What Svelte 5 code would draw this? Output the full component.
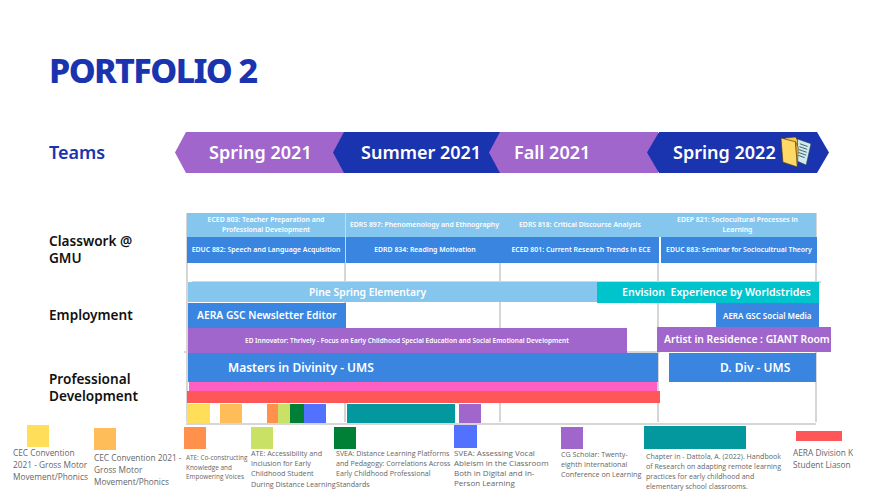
<script>
  const originX = 176
  const originY = 213

  const seasons = [
    { name: 'Spring 2021', color: 'purple', width: 169, pad: 34 },
    { name: 'Summer 2021', color: 'navy', width: 167, pad: 28 },
    { name: 'Fall 2021', color: 'purple', width: 169, pad: 25 },
    { name: 'Spring 2022', color: 'navy last', width: 182, pad: 26, folder: true }
  ]

  const gridX = [187, 345, 500, 658, 816]
  const gridY = [
    { y: 281, x0: 192, x1: 821 },
    { y: 351, x0: 184, x1: 660 },
    { y: 423, x0: 186, x1: 816 }
  ]

  const sky = '#85c6ee', blue = '#3985e0', purple = '#a066cb', teal = '#03989e'
  const bars = [
    { x0: 187, x1: 345, y0: 213, y1: 237, c: sky, fs: 6.9, text: 'ECED 803: Teacher Preparation and Professional Development' },
    { x0: 346, x1: 501, y0: 213, y1: 237, c: sky, fs: 6.9, one: true, text: 'EDRS 897: Phenomenology and Ethnography' },
    { x0: 501, x1: 659, y0: 213, y1: 237, c: sky, fs: 6.9, text: 'EDRS 818: Critical Discourse Analysis' },
    { x0: 659, x1: 816, y0: 213, y1: 237, c: sky, fs: 6.9, text: 'EDEP 821: Sociocultural Processes in\nLearning' },
    { x0: 187, x1: 345, y0: 237, y1: 263, c: blue, fs: 6.9, text: 'EDUC 882: Speech and Language Acquisition' },
    { x0: 346, x1: 504, y0: 237, y1: 263, c: blue, fs: 6.9, text: 'EDRD 834: Reading Motivation' },
    { x0: 503, x1: 659, y0: 237, y1: 263, c: blue, fs: 6.9, text: 'ECED 801: Current Research Trends in ECE' },
    { x0: 661, x1: 817, y0: 237, y1: 263, c: blue, fs: 6.9, text: 'EDUC 883: Seminar for Sociocultrual Theory' },
    { x0: 188, x1: 597, y0: 282, y1: 302, c: sky, fs: 10.3, text: 'Pine Spring Elementary', tx: 309 },
    { x0: 597, x1: 819, y0: 282, y1: 303, c: '#00c4cc', fs: 10.6, text: 'Envision  Experience by Worldstrides', tx: 622 },
    { x0: 188, x1: 346, y0: 303, y1: 328, c: blue, fs: 10.3, text: 'AERA GSC Newsletter Editor', tx: 197 },
    { x0: 716, x1: 819, y0: 303, y1: 328, c: blue, fs: 8, text: 'AERA GSC Social Media', tx: 723 },
    { x0: 188, x1: 627, y0: 328, y1: 353, c: purple, fs: 6.5, text: 'ED Innovator: Thrively - Focus on Early Childhood Special Education and Social Emotional Development', tx: 245 },
    { x0: 657, x1: 831, y0: 327, y1: 352, c: purple, fs: 10.3, text: 'Artist in Residence : GIANT Room', tx: 664 },
    { x0: 188, x1: 658, y0: 353, y1: 382, c: blue, fs: 12, text: 'Masters in Divinity - UMS', tx: 228 },
    { x0: 669, x1: 816, y0: 353, y1: 382, c: blue, fs: 12, text: 'D. Div - UMS', tx: 720 },
    { x0: 189, x1: 657, y0: 382, y1: 391, c: '#ff5fc0' },
    { x0: 187, x1: 660, y0: 391, y1: 403, c: '#ff5757' },
    { x0: 187, x1: 210, y0: 404, y1: 423, c: '#ffde59' },
    { x0: 220, x1: 242, y0: 404, y1: 423, c: '#ffbd59' },
    { x0: 267, x1: 278, y0: 404, y1: 423, c: '#ff914d' },
    { x0: 278, x1: 290, y0: 404, y1: 423, c: '#c9e265' },
    { x0: 290, x1: 304, y0: 404, y1: 423, c: '#008037' },
    { x0: 304, x1: 326, y0: 404, y1: 423, c: '#5271ff' },
    { x0: 347, x1: 455, y0: 404, y1: 423, c: teal },
    { x0: 459, x1: 481, y0: 404, y1: 423, c: purple }
  ]

  // sx/sy = swatch offset, ty = gap down to the caption, tx = caption indent
  const legend = [
    { w: 81, x: 13, sx: 14, sw: 22, sh: 22, sy: 0, ty: 0, fs: 8.3, lh: 12, c: '#ffde59', lines: ['CEC Convention', '2021 - Gross Motor', 'Movement/Phonics'] },
    { w: 90, sx: 0, sw: 22, sh: 22, sy: 3, ty: 2, fs: 8.3, lh: 12, c: '#ffbd59', lines: ['CEC Convention 2021 -', 'Gross Motor', 'Movement/Phonics'] },
    { w: 67, sx: 0, sw: 22, sh: 22, sy: 2, ty: 4, fs: 6.4, lh: 9.5, tx: 2, c: '#ff914d', lines: ['ATE: Co-constructing', 'Knowledge and', 'Empowering Voices'] },
    { w: 83, sx: 0, sw: 22, sh: 22, sy: 2, ty: -1, fs: 7.2, lh: 10.2, c: '#c9e265', lines: ['ATE: Accessibility and', 'Inclusion for Early', 'Childhood Student', 'During Distance Learning'] },
    { w: 120, sx: 0, sw: 22, sh: 22, sy: 2, ty: -1, fs: 7.1, lh: 10.2, tx: 2, c: '#008037', lines: ['SVEA: Distance Learning Platforms', 'and Pedagogy: Correlations Across', 'Early Childhood Professional', 'Standards'] },
    { w: 107, sx: 0, sw: 23, sh: 23, sy: 0, ty: 0, fs: 8, lh: 10, c: '#5271ff', lines: ['SVEA: Assessing Vocal', 'Ableism in the Classroom', 'Both in Digital and In-', 'Person Learning'] },
    { w: 83, sx: 0, sw: 22, sh: 22, sy: 2, ty: 0, fs: 7.2, lh: 10.2, c: purple, lines: ['CG Scholar: Twenty-', 'eighth International', 'Conference on Learning'] },
    { w: 149, sx: 0, sw: 102, sh: 23, sy: 1, ty: 2, fs: 7.1, lh: 10, tx: 2, c: teal, lines: ['Chapter in - Dattola, A. (2022). Handbook', 'of Research on adapting remote learning', 'practices for early childhood and', 'elementary school classrooms.'] },
    { w: 81, sx: 3, sw: 46, sh: 10, sy: 6, ty: 6, fs: 8.3, lh: 12, c: '#ff5757', lines: ['AERA Division K', 'Student Liason'] }
  ]
</script>

<div class="page">
  <h1>PORTFOLIO 2</h1>

  <div class="teams">
    <div class="teams-label">Teams</div>
    <div class="seasons">
      {#each seasons as s}
        <div class="season {s.color}" style="width: {s.width}px; padding-left: {s.pad}px">
          <span>{s.name}</span>
          {#if s.folder}
            <svg class="folder" viewBox="0 0 32 34" width="31" height="33">
              <path d="M5 3l11-1 2 3 1 22-13 1z" fill="#f6c64f" stroke="#4a3a10" stroke-width=".6" />
              <path d="M18 4l14 5-5 22-9-4z" fill="#cfe9ee" stroke="#2d3f4a" stroke-width=".6" />
              <path d="M20.5 9l8 2.8M20 12l8 2.8M19.5 15l8 2.8M19 18l8 2.8M19 21l6.5 2.3" stroke="#41606c" stroke-width="1" fill="none" />
              <path d="M1 3l15 4 2 26L3 28z" fill="#ffd966" stroke="#4a3a10" stroke-width=".7" />
              <path d="M16 7l3 6-1 20z" fill="#e4a92f" stroke="#4a3a10" stroke-width=".5" />
            </svg>
          {/if}
        </div>
      {/each}
    </div>
  </div>

  <div class="main">
    <div class="labels">
      <div class="classwork">Classwork @<br />GMU</div>
      <div class="employment">Employment</div>
      <div class="development">Professional<br />Development</div>
    </div>

    <div class="gantt">
      {#each gridX as x}
        <i class="vline" style="left: {x - originX - 1}px"></i>
      {/each}
      {#each gridY as g}
        <i class="hline" style="left: {g.x0 - originX}px; top: {g.y - originY}px; width: {g.x1 - g.x0}px"></i>
      {/each}
      {#each bars as b}
        <div
          class="bar"
          class:indented={b.tx || b.one}
          class:centered={b.one}
          style="left: {b.x0 - originX}px; top: {b.y0 - originY}px; width: {b.x1 - b.x0}px; height: {b.y1 - b.y0}px; background: {b.c}; font-size: {b.fs}px; padding-left: {b.tx ? b.tx - b.x0 : 2}px"
        >{b.text || ''}</div>
      {/each}
    </div>
  </div>

  <div class="legend">
    {#each legend as l}
      <div class="item" style="margin-left: {l.x || 0}px; width: {l.w}px">
        <div class="swatch" style="margin: {l.sy}px 0 {l.ty}px {l.sx}px; width: {l.sw}px; height: {l.sh}px; background: {l.c}"></div>
        <div class="caption" style="font-size: {l.fs}px; line-height: {l.lh}px; padding-left: {l.tx || 0}px">
          {#each l.lines as line}
            <div>{line}</div>
          {/each}
        </div>
      </div>
    {/each}
  </div>
</div>

<style>
  :global(body) {
    margin: 0;
    background: #fff;
  }

  .page {
    width: 874px;
    height: 492px;
    overflow: hidden;
    font-family: "Noto Sans", sans-serif;
  }

  h1 {
    margin: 0;
    height: 132px;
    box-sizing: border-box;
    padding: 46px 0 0 49px;
    font-size: 34px;
    line-height: 48px;
    font-weight: 800;
    letter-spacing: -1.6px;
    color: #1a34b0;
  }

  .teams {
    display: flex;
    height: 41px;
  }

  .teams-label {
    width: 126px;
    padding-left: 49px;
    font-size: 18px;
    font-weight: 600;
    line-height: 41px;
    color: #1a34b0;
  }

  .seasons {
    display: flex;
  }

  .season {
    position: relative;
    box-sizing: border-box;
    height: 41px;
    margin-right: -11px;
    clip-path: polygon(0 50%, 11px 0, 100% 0, 100% 100%, 11px 100%);
    color: #fff;
    font-size: 18px;
    font-weight: 600;
    line-height: 40px;
    white-space: nowrap;
  }

  .season.last {
    clip-path: polygon(0 50%, 12px 0, 170px 0, 100% 50%, 170px 100%, 12px 100%);
  }

  .purple {
    background: #a066cb;
  }

  .navy {
    background: #1a34b0;
  }

  .folder {
    position: absolute;
    left: 133px;
    top: 3px;
  }

  .main {
    display: flex;
    margin-top: 40px;
    height: 212px;
  }

  .labels {
    width: 176px;
    box-sizing: border-box;
    padding-left: 49px;
    color: #111;
    font-size: 13.6px;
    font-weight: 600;
    line-height: 17px;
  }

  .classwork {
    padding-top: 19px;
  }

  .employment {
    padding-top: 40px;
  }

  .development {
    padding-top: 47px;
  }

  .gantt {
    position: relative;
    flex: 1;
  }

  .vline {
    position: absolute;
    top: 0;
    width: 2px;
    height: 209px;
    background: #d6d6d6;
  }

  .hline {
    position: absolute;
    height: 2px;
    background: #d6d6d6;
  }

  .bar {
    position: absolute;
    display: flex;
    align-items: center;
    justify-content: center;
    box-sizing: border-box;
    padding-right: 2px;
    color: #fff;
    font-weight: 600;
    line-height: 1.45;
    text-align: center;
    white-space: pre-wrap;
  }

  .bar.indented {
    justify-content: flex-start;
    padding-right: 0;
    white-space: pre;
  }

  .bar.centered {
    justify-content: center;
  }

  .legend {
    display: flex;
    height: 67px;
  }

  .item {
    flex: none;
  }

  .caption {
    font-family: "Open Sans", sans-serif;
    color: #666;
    white-space: nowrap;
  }
</style>
